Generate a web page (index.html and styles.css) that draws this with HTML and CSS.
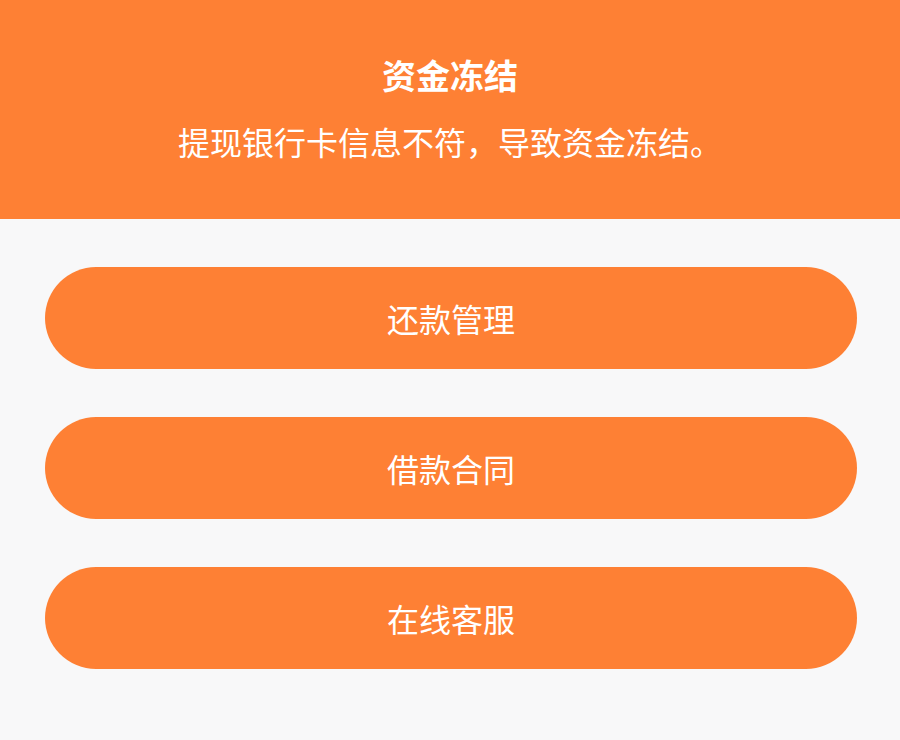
FILE: index.html
```html
<!DOCTYPE html>
<html lang="zh-CN">
<head>
<meta charset="utf-8">
<title>资金冻结</title>
<link rel="stylesheet" href="styles.css">
</head>
<body>
<div class="page">
  <header class="banner">
    <h1 class="title">资金冻结</h1>
    <p class="desc">提现银行卡信息不符，导致资金冻结。</p>
  </header>
  <main class="actions">
    <button class="btn">还款管理</button>
    <button class="btn">借款合同</button>
    <button class="btn">在线客服</button>
  </main>
</div>
</body>
</html>
```
FILE: styles.css
```css
html, body {
  margin: 0;
  padding: 0;
}
body {
  background: #f8f8f9;
  font-family: "Noto Sans CJK SC", "Noto Sans", sans-serif;
  width: 900px;
  height: 740px;
  overflow: hidden;
}
.page {
  display: flex;
  flex-direction: column;
}
.banner {
  background: #fe8034;
  height: 219px;
  box-sizing: border-box;
  padding-top: 49px;
  display: flex;
  flex-direction: column;
  align-items: center;
  color: #fff;
}
.title {
  margin: 0;
  font-size: 34px;
  font-weight: 700;
  line-height: 52px;
}
.desc {
  margin: 16px 0 0;
  font-size: 32px;
  font-weight: 400;
  line-height: 48px;
}
.actions {
  display: flex;
  flex-direction: column;
  gap: 48px;
  padding: 48px 43px 0 45px;
}
.btn {
  width: 812px;
  height: 102px;
  border: none;
  border-radius: 51px;
  background: #fe8034;
  color: #fff;
  font-family: "Noto Sans CJK SC", "Noto Sans", sans-serif;
  font-size: 32px;
  padding: 0;
  display: flex;
  align-items: center;
  justify-content: center;
}
```
